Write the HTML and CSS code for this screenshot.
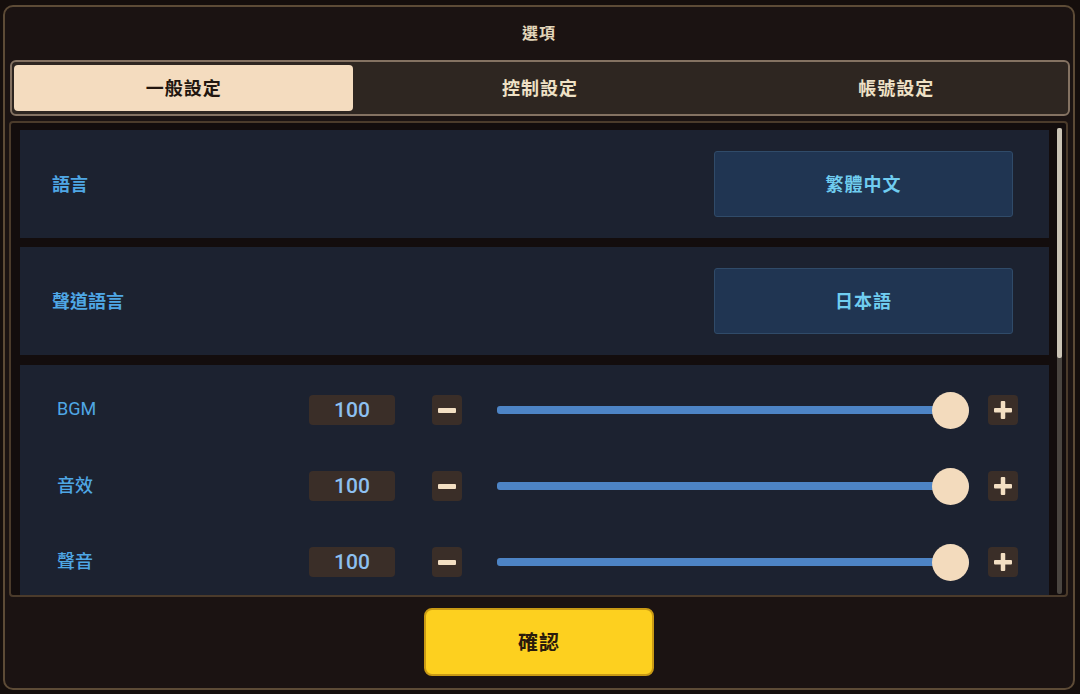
FILE: index.html
```html
<!DOCTYPE html>
<html lang="zh-Hant">
<head>
<meta charset="utf-8">
<title>選項</title>
<link rel="stylesheet" href="styles.css">
</head>
<body>
<div class="frame">
  <div class="title">選項</div>
  <div class="tabs">
    <div class="tab active">一般設定</div>
    <div class="tab">控制設定</div>
    <div class="tab">帳號設定</div>
  </div>
  <div class="panel">
    <div class="scroll">
      <div class="row">
        <span class="label">語言</span>
        <div class="select">繁體中文</div>
      </div>
      <div class="row">
        <span class="label">聲道語言</span>
        <div class="select">日本語</div>
      </div>
      <div class="volumes">
        <div class="vol">
          <span class="vlabel latin">BGM</span>
          <div class="value">100</div>
          <div class="step minus"><svg width="18" height="18" viewBox="0 0 18 18"><rect x="0" y="7" width="18" height="5" rx="1" fill="#f3dfc3"/></svg></div>
          <div class="slider"><div class="track"></div><div class="knob"></div></div>
          <div class="step plus"><svg width="18" height="18" viewBox="0 0 18 18"><rect x="0" y="7" width="18" height="4.5" rx="1" fill="#f3dfc3"/><rect x="6.75" y="0" width="4.5" height="18" rx="1" fill="#f3dfc3"/></svg></div>
        </div>
        <div class="vol">
          <span class="vlabel">音效</span>
          <div class="value">100</div>
          <div class="step minus"><svg width="18" height="18" viewBox="0 0 18 18"><rect x="0" y="7" width="18" height="5" rx="1" fill="#f3dfc3"/></svg></div>
          <div class="slider"><div class="track"></div><div class="knob"></div></div>
          <div class="step plus"><svg width="18" height="18" viewBox="0 0 18 18"><rect x="0" y="7" width="18" height="4.5" rx="1" fill="#f3dfc3"/><rect x="6.75" y="0" width="4.5" height="18" rx="1" fill="#f3dfc3"/></svg></div>
        </div>
        <div class="vol">
          <span class="vlabel">聲音</span>
          <div class="value">100</div>
          <div class="step minus"><svg width="18" height="18" viewBox="0 0 18 18"><rect x="0" y="7" width="18" height="5" rx="1" fill="#f3dfc3"/></svg></div>
          <div class="slider"><div class="track"></div><div class="knob"></div></div>
          <div class="step plus"><svg width="18" height="18" viewBox="0 0 18 18"><rect x="0" y="7" width="18" height="4.5" rx="1" fill="#f3dfc3"/><rect x="6.75" y="0" width="4.5" height="18" rx="1" fill="#f3dfc3"/></svg></div>
        </div>
      </div>
    </div>
    <div class="scrollbar"><div class="thumb"></div></div>
  </div>
  <div class="footer">
    <button class="confirm">確認</button>
  </div>
</div>
</body>
</html>
```

FILE: styles.css
```css
* { box-sizing: border-box; }

html, body {
  margin: 0;
  padding: 0;
  width: 1080px;
  height: 694px;
  overflow: hidden;
  background: #150e0c;
  font-family: "Noto Sans CJK TC", "Noto Sans", sans-serif;
}

.frame {
  margin: 5px 5px 0 3px;
  height: 685px;
  border: 2px solid #5d4b36;
  border-radius: 10px;
  background: #1b1312;
  display: flex;
  flex-direction: column;
}

.title {
  height: 53px;
  padding-bottom: 3px;
  display: flex;
  align-items: center;
  justify-content: center;
  color: #e4d7bb;
  font-size: 16px;
  font-weight: 700;
  letter-spacing: 1px;
}

.tabs {
  margin: 0 3px 0 5px;
  height: 56px;
  border: 2px solid #847262;
  border-radius: 6px;
  background: #2e2621;
  padding: 3px 2px;
  display: grid;
  grid-template-columns: repeat(3, 1fr);
  column-gap: 17px;
}

.tab {
  display: flex;
  align-items: center;
  justify-content: center;
  padding-bottom: 2px;
  color: #efe1c6;
  font-size: 18px;
  font-weight: 700;
  letter-spacing: 1px;
  border-radius: 4px;
}

.tab.active {
  background: #f4dcbf;
  color: #22160f;
}

.panel {
  position: relative;
  margin: 5px 5px 0 4px;
  height: 476px;
  border: 2px solid #4b3b2b;
  border-radius: 4px;
  background: #130d0d;
  overflow: hidden;
}

.scroll {
  height: 100%;
  padding: 7px 17px 0 9px;
  overflow: hidden;
  display: flex;
  flex-direction: column;
  gap: 9px;
}

.row {
  flex: none;
  height: 108px;
  background: #1c2230;
  display: flex;
  align-items: center;
  justify-content: space-between;
  padding: 0 36px 0 32px;
}

.label {
  color: #4fa7e5;
  font-size: 18px;
  font-weight: 700;
  padding-bottom: 3px;
}

.select {
  width: 299px;
  height: 66px;
  background: #203552;
  border: 1px solid #304b69;
  border-radius: 3px;
  display: flex;
  align-items: center;
  justify-content: center;
  padding-bottom: 2px;
  color: #70cdf0;
  font-size: 18px;
  font-weight: 700;
  letter-spacing: 1px;
}

.volumes {
  flex: none;
  margin-top: 1px;
  background: #1c2230;
  padding: 7px 31px 12px 37px;
}

.vol {
  height: 76px;
  display: flex;
  align-items: center;
}

.vlabel {
  width: 252px;
  color: #4fa7e5;
  font-size: 18px;
  font-weight: 500;
  padding-bottom: 4px;
}

.vlabel.latin {
  font-family: "Roboto", "Noto Sans", sans-serif;
  font-weight: 400;
}

.value {
  width: 86px;
  height: 30px;
  border-radius: 4px;
  background: #3a2e28;
  color: #8dc0f1;
  font-family: "Roboto", "Noto Sans", sans-serif;
  font-size: 21px;
  font-weight: 500;
  display: flex;
  align-items: center;
  justify-content: center;
}

.step {
  width: 30px;
  height: 30px;
  border-radius: 4px;
  background: #3a2e28;
  display: flex;
  align-items: center;
  justify-content: center;
}

.step.minus { margin-left: 37px; }
.step.plus { margin-left: 19px; }

.slider {
  position: relative;
  flex: 1;
  height: 37px;
  margin-left: 35px;
  display: flex;
  align-items: center;
}

.track {
  width: 100%;
  height: 8px;
  border-radius: 3px;
  background: #4d84c5;
}

.knob {
  position: absolute;
  right: 0;
  top: 0;
  width: 37px;
  height: 37px;
  border-radius: 50%;
  background: #f3dbbd;
}

.scrollbar {
  position: absolute;
  top: 5px;
  right: 4px;
  width: 5px;
  height: 466px;
  background: #4a4540;
  border-radius: 2px;
}

.thumb {
  height: 230px;
  background: #cbc4b6;
  border-radius: 2px;
}

.footer {
  flex: 1;
  display: flex;
  align-items: center;
  justify-content: center;
  padding-bottom: 2px;
}

.confirm {
  width: 230px;
  height: 68px;
  background: #fdd01f;
  border: 2px solid #c99a14;
  border-radius: 8px;
  color: #2a1a0c;
  font-family: "Noto Sans CJK TC", "Noto Sans", sans-serif;
  font-size: 20px;
  font-weight: 700;
  letter-spacing: 1px;
  padding-bottom: 2px;
  cursor: pointer;
}
```
